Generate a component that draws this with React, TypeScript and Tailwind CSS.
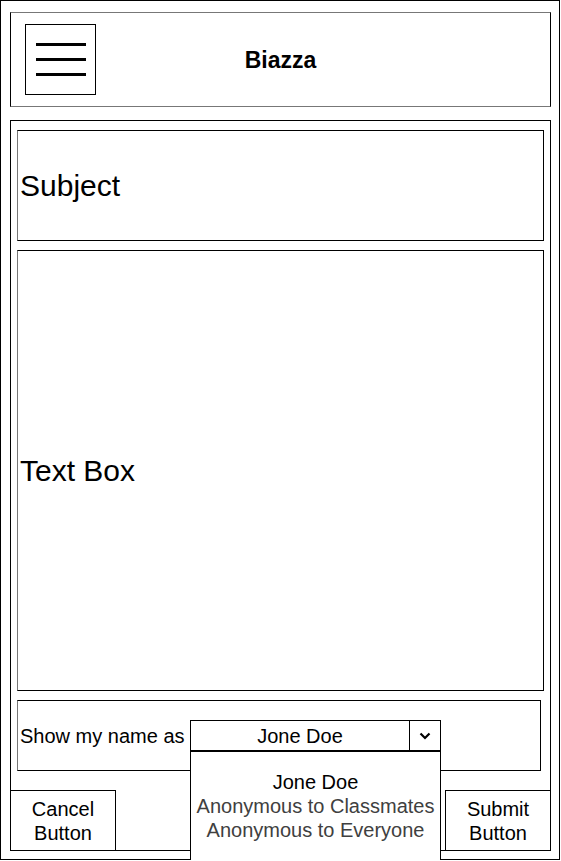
import React from "react";

const font = { fontFamily: '"Liberation Sans", Arial, Helvetica, sans-serif' };

function MenuIcon() {
  return (
    <div className="w-[71px] h-[71px] border border-black flex flex-col justify-center items-center gap-[12px]">
      <div className="w-[50px] h-[3px] bg-black" />
      <div className="w-[50px] h-[3px] bg-black" />
      <div className="w-[50px] h-[3px] bg-black" />
    </div>
  );
}

function NameSelect() {
  return (
    <div className="relative w-[251px] h-[31px] border border-black flex bg-white">
      <div className="w-[219px] border-r border-black flex items-center justify-center text-[20px] text-black">
        Jone Doe
      </div>
      <div className="flex-1 flex items-center justify-center">
        <svg width="12" height="8" viewBox="0 0 12 8">
          <path d="M1.5 1.5 L6 6 L10.5 1.5" fill="none" stroke="black" strokeWidth="2.2" />
        </svg>
      </div>
      <div className="absolute left-[-1px] top-[30px] w-[251px] h-[120px] bg-white border-x border-t border-black pt-[18px] flex flex-col items-center text-[20px] leading-[24px] z-10">
        <div className="text-black">Jone Doe</div>
        <div className="text-[#404040]">Anonymous to Classmates</div>
        <div className="text-[#404040]">Anonymous to Everyone</div>
      </div>
    </div>
  );
}

export default function App() {
  return (
    <div style={font} className="w-[560px] h-[860px] border border-black bg-white pt-[11px] pl-[9px] overflow-visible">
      {/* header */}
      <div className="w-[541px] h-[95px] border border-black border-y-[#777] pl-[14px] flex items-center relative">
        <MenuIcon />
        <div className="absolute inset-0 pt-[2px] flex items-center justify-center text-[23px] font-bold text-black pointer-events-none">
          Biazza
        </div>
      </div>

      {/* main form */}
      <div className="mt-[13px] w-[541px] h-[731px] border border-black flex flex-col">
        <div className="px-[6px] pt-[9px] flex flex-col gap-[9px]">
          <div className="h-[111px] border border-black border-l-[#777] flex items-center pl-[2px] text-[30px] text-black">
            Subject
          </div>
          <div className="h-[441px] border border-black border-l-[#777] flex items-center pl-[2px] text-[30px] text-black">
            Text Box
          </div>
          <div className="w-[524px] h-[71px] border border-black border-l-[#777] flex items-center pl-[2px] text-[20px] text-black">
            <div className="w-[170px]">Show my name as</div>
            <NameSelect />
          </div>
        </div>
        <div className="mt-auto -mx-px -mb-px flex justify-between">
          <div className="w-[106px] h-[61px] border border-black flex items-center justify-center text-center text-[20px] leading-[24px] text-black">
            Cancel
            <br />
            Button
          </div>
          <div className="w-[106px] h-[61px] border border-black flex items-center justify-center text-center text-[20px] leading-[24px] text-black">
            Submit
            <br />
            Button
          </div>
        </div>
      </div>
    </div>
  );
}
